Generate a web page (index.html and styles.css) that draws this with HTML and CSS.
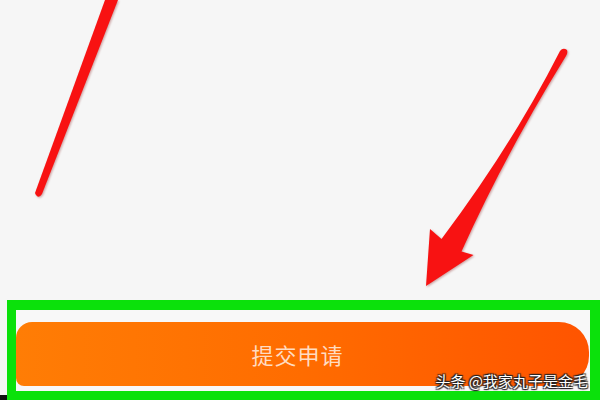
FILE: index.html
```
<!DOCTYPE html>
<html lang="zh-CN">
<head>
    <meta charset="UTF-8">
    <meta name="viewport" content="width=device-width, initial-scale=1.0">
    <title>提交申请</title>
    <link rel="stylesheet" href="styles.css">
</head>
<body>
    <div id="page">
        <div class="canvas"></div>
        <div class="footer">
            <div class="edge"></div>
            <div class="frame">
                <button class="submit">提交申请</button>
                <span class="watermark">头条 @我家丸子是金毛</span>
            </div>
        </div>

        <!-- red annotation strokes drawn over the screenshot -->
        <svg class="marks" width="600" height="400" viewBox="0 0 600 400">
            <path d="M105,0 L118,0 L42,194 Q38,200 35,193 Z" />
            <path d="M560,51 Q563,47 567,50 Q568,53 566,56
                     Q505.5,153.75 461.5,251.5
                     L473.5,255 L426,286 L430,229 L441.5,239
                     Q512.25,145 560,51 Z" />
        </svg>
    </div>
</body>
</html>
```

FILE: styles.css
```
body {
    margin: 0;
    background-color: #f6f6f6;
    font-family: 'Noto Sans CJK SC', 'Noto Sans', sans-serif;
}

#page {
    position: relative;
    width: 600px;
    height: 400px;
    display: flex;
    flex-direction: column;
    overflow: hidden;
}

.canvas {
    flex: 1;
}

.footer {
    display: flex;
    align-items: flex-end;
}

.edge {
    width: 7px;
    height: 5px;
    background-color: #111;
}

.frame {
    position: relative;
    flex: 1;
    border: 9px solid #0be10b;
    border-top-width: 10px;
    border-right-width: 10px;
    padding: 12px 1px 5px 0;
    background-color: #f8f8f8;
}

.submit {
    display: block;
    width: 100%;
    height: 64px;
    border: none;
    border-radius: 16px 30px 30px 8px;
    background: linear-gradient(90deg, #ff7d05, #ff6c00 50%, #ff5400);
    color: #ffdcc2;
    font-family: inherit;
    font-size: 22px;
    letter-spacing: 1px;
    padding: 0 10px 0 0;
}

.watermark {
    position: absolute;
    right: 2px;
    bottom: 0;
    font-size: 15px;
    line-height: 20px;
    color: #fff;
    text-shadow: 1px 1px 1px #222, -1px -1px 1px #222, 1px -1px 1px #222, -1px 1px 1px #222;
}

.marks {
    position: absolute;
    left: 0;
    top: 0;
    pointer-events: none;
    fill: #f81212;
    filter: drop-shadow(1px 1px 1px rgba(120, 0, 0, 0.35));
}
```
